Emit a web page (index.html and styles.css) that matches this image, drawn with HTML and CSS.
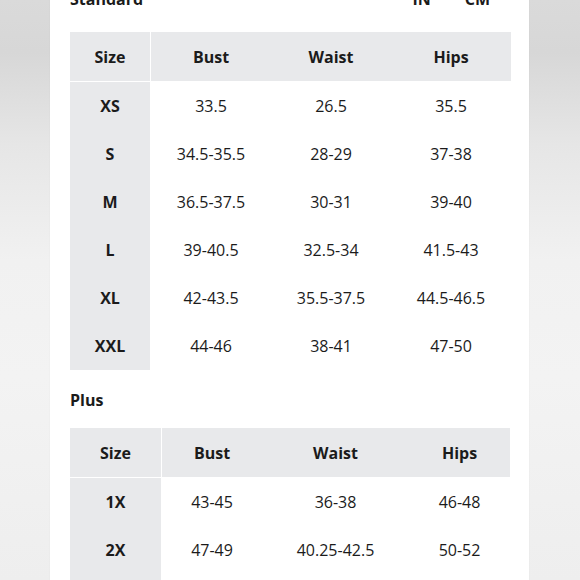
FILE: index.html
```html
<!DOCTYPE html>
<html>
<head>
<meta charset="utf-8">
<link rel="stylesheet" href="styles.css">
</head>
<body>
<div class="panel">
  <div class="topbar">
    <span class="title">Standard</span>
    <div class="units"><span>IN</span><span>CM</span></div>
  </div>
  <table class="chart std">
    <colgroup><col class="c-size"><col class="c-std"><col class="c-std"><col class="c-std"></colgroup>
    <thead>
      <tr><th class="size">Size</th><th>Bust</th><th>Waist</th><th>Hips</th></tr>
    </thead>
    <tbody>
      <tr><th class="size">XS</th><td>33.5</td><td>26.5</td><td>35.5</td></tr>
      <tr><th class="size">S</th><td>34.5-35.5</td><td>28-29</td><td>37-38</td></tr>
      <tr><th class="size">M</th><td>36.5-37.5</td><td>30-31</td><td>39-40</td></tr>
      <tr><th class="size">L</th><td>39-40.5</td><td>32.5-34</td><td>41.5-43</td></tr>
      <tr><th class="size">XL</th><td>42-43.5</td><td>35.5-37.5</td><td>44.5-46.5</td></tr>
      <tr><th class="size">XXL</th><td>44-46</td><td>38-41</td><td>47-50</td></tr>
    </tbody>
  </table>
  <div class="section-title">Plus</div>
  <table class="chart plus">
    <colgroup><col class="p-size"><col class="p-bust"><col class="p-waist"><col class="p-hips"></colgroup>
    <thead>
      <tr><th class="size">Size</th><th>Bust</th><th>Waist</th><th>Hips</th></tr>
    </thead>
    <tbody>
      <tr><th class="size">1X</th><td>43-45</td><td>36-38</td><td>46-48</td></tr>
      <tr><th class="size">2X</th><td>47-49</td><td>40.25-42.5</td><td>50-52</td></tr>
      <tr class="cut"><th class="size"></th><td></td><td></td><td></td></tr>
    </tbody>
  </table>
</div>
</body>
</html>
```
FILE: styles.css
```css
html, body {
  margin: 0;
  padding: 0;
}
body {
  width: 580px;
  height: 580px;
  overflow: hidden;
  font-family: "Open Sans", "DejaVu Sans", sans-serif;
  color: #1b1b1b;
  background: linear-gradient(to bottom, #dadada 0%, #d7d7d7 9%, #e6e6e6 25%, #f1f1f1 45%, #f3f3f3 65%, #eeeeee 100%);
}
.panel {
  margin-left: 50px;
  width: 479px;
  height: 600px;
  background: #fff;
  box-sizing: border-box;
  padding: 0 19px 0 20px;
  margin-top: -12px;
  box-shadow: 0 0 1px rgba(0,0,0,0.08);
}
.topbar {
  display: flex;
  justify-content: space-between;
  align-items: center;
  height: 22px;
  line-height: 22px;
  font-weight: 700;
  font-size: 16px;
}
.units {
  display: flex;
  gap: 34px;
  padding-right: 20px;
}
.chart {
  border-collapse: separate;
  border-spacing: 0;
  width: 440px;
  table-layout: fixed;
  font-size: 16px;
}
.std {
  margin-top: 22px;
}
.c-size { width: 81px; }
.c-std { width: 120px; }
.p-size { width: 92px; }
.p-bust { width: 100px; }
.p-waist { width: 147px; }
.p-hips { width: 101px; }
.chart th, .chart td {
  padding: 0;
  text-align: center;
  vertical-align: middle;
}
.chart thead th {
  height: 49px;
  background: #e8e9eb;
  font-weight: 700;
  border-bottom: 1px solid #fff;
}
.chart tbody td, .chart tbody th {
  height: 48px;
  font-weight: 400;
}
.chart th.size {
  background: #e8e9eb;
  font-weight: 700;
  border-right: 1px solid #fff;
}
.section-title {
  margin-top: 19px;
  height: 22px;
  line-height: 22px;
  font-size: 16px;
  font-weight: 700;
}
.plus {
  margin-top: 17px;
}
.chart tr.cut th, .chart tr.cut td {
  height: 30px;
}
```
